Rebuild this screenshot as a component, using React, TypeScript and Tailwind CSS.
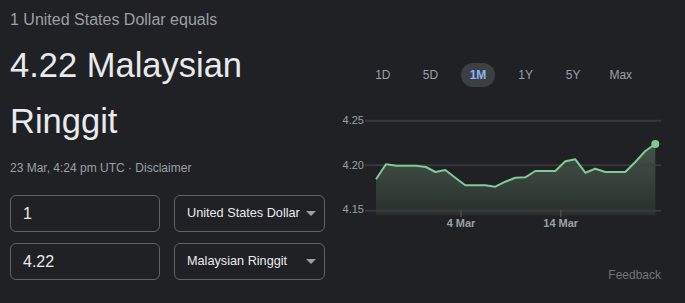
const points: [number, number][] = [
  [50, 69.3], [60, 54.3], [70.7, 55.7], [90, 55.7], [100, 57], [109.3, 62],
  [119.3, 60], [129.3, 67.7], [139.3, 75.3], [159.3, 75.3], [169.3, 76.7],
  [179.3, 71.7], [189.3, 67.7], [199.3, 67.3], [209.3, 61], [229.3, 61],
  [239.3, 51.3], [249.3, 49.3], [259.3, 62.7], [269.3, 58.7], [279.3, 62],
  [299.3, 62], [309.3, 52], [319.3, 41], [329.3, 34],
];

const ranges = ["1D", "5D", "1M", "1Y", "5Y", "Max"];

const Arrow = () => (
  <svg width="10" height="5" viewBox="0 0 10 5" className="shrink-0">
    <polygon points="0,0 10,0 5,5" fill="#9aa0a6" />
  </svg>
);

const Chart = () => {
  const line = points.map((p) => p.join(",")).join(" ");
  const area = `${line} 329.3,105.3 50,105.3`;
  return (
    <svg width="359" height="122" viewBox="0 0 359 122" className="mt-[23px] block">
      <defs>
        <linearGradient id="fill" x1="0" y1="0" x2="0" y2="1">
          <stop offset="0" stopColor="#43554a" />
          <stop offset="1" stopColor="#2a2f2c" />
        </linearGradient>
      </defs>
      <line x1="39" x2="335" y1="10.7" y2="10.7" stroke="#37383b" strokeWidth="2" />
      <polygon points={area} fill="url(#fill)" />
      <line x1="39" x2="335" y1="55.3" y2="55.3" stroke="#3c3e41" strokeWidth="2" strokeOpacity="0.8" />
      <line x1="39" x2="335" y1="100.7" y2="100.7" stroke="#3c3e41" strokeWidth="2" strokeOpacity="0.8" />
      <polyline points={line} fill="none" stroke="#81c995" strokeWidth="2" strokeLinejoin="round" />
      <circle cx="329.3" cy="34" r="4" fill="#81c995" />
      <line x1="135" x2="135" y1="100" y2="107" stroke="#4a4c50" strokeWidth="1.5" />
      <line x1="234.7" x2="234.7" y1="100" y2="107" stroke="#4a4c50" strokeWidth="1.5" />
      <g fill="#9aa0a6" fontSize="11" fontFamily="'Liberation Sans', Arial, sans-serif" textAnchor="end">
        <text x="38" y="14">4.25</text>
        <text x="38" y="58.7">4.20</text>
        <text x="38" y="103.3">4.15</text>
      </g>
      <g fill="#9aa0a6" fontSize="11" fontWeight="bold" fontFamily="'Liberation Sans', Arial, sans-serif" textAnchor="middle">
        <text x="135" y="117.3">4 Mar</text>
        <text x="234.7" y="117.3">14 Mar</text>
      </g>
    </svg>
  );
};

export default function App() {
  return (
    <div className="w-[685px] h-[303px] bg-[#202124] flex font-['Liberation_Sans',Arial,sans-serif] overflow-hidden">
      <div className="w-[326px] pl-[10px] pt-[10px] flex flex-col">
        <p className="text-[16px] leading-[20px] text-[#9aa0a6]">1 United States Dollar equals</p>
        <h1 className="mt-[7px] text-[34.5px] leading-[56px] text-[#e8eaed]">4.22 Malaysian Ringgit</h1>
        <p className="mt-[11px] text-[12px] leading-[16px] text-[#9aa0a6]">
          23 Mar, 4:24 pm UTC · Disclaimer
        </p>
        <div className="mt-[19px] flex flex-col gap-[11px]">
          {[
            ["1", "United States Dollar"],
            ["4.22", "Malaysian Ringgit"],
          ].map(([amount, currency]) => (
            <div key={currency} className="flex gap-[14px]">
              <div className="w-[150px] h-[37px] border border-[#5f6368] rounded-[6px] flex items-center pl-[12px] text-[16px] text-[#e8eaed]">
                {amount}
              </div>
              <div className="w-[151px] h-[37px] border border-[#5f6368] rounded-[6px] flex items-center justify-between gap-[4px] pl-[12px] pr-[8px] text-[12.7px] text-[#e8eaed]">
                <span className="whitespace-nowrap">{currency}</span>
                <Arrow />
              </div>
            </div>
          ))}
        </div>
      </div>
      <div className="w-[359px] flex flex-col">
        <div className="mt-[63px] h-[24px] pl-[33px] flex">
          {ranges.map((r) => (
            <div key={r} className="w-[47.6px] flex justify-center">
              <span
                className={
                  r === "1M"
                    ? "h-[24px] w-[34px] rounded-full bg-[#3c4043] text-[#8ab4f8] font-bold text-[12px] flex items-center justify-center"
                    : "h-[24px] text-[#9aa0a6] text-[12px] flex items-center"
                }
              >
                {r}
              </span>
            </div>
          ))}
        </div>
        <Chart />
        <div className="mt-[34.5px] pr-[24px] flex justify-end text-[12px] leading-[16px] text-[#70757a]">
          Feedback
        </div>
      </div>
    </div>
  );
}
